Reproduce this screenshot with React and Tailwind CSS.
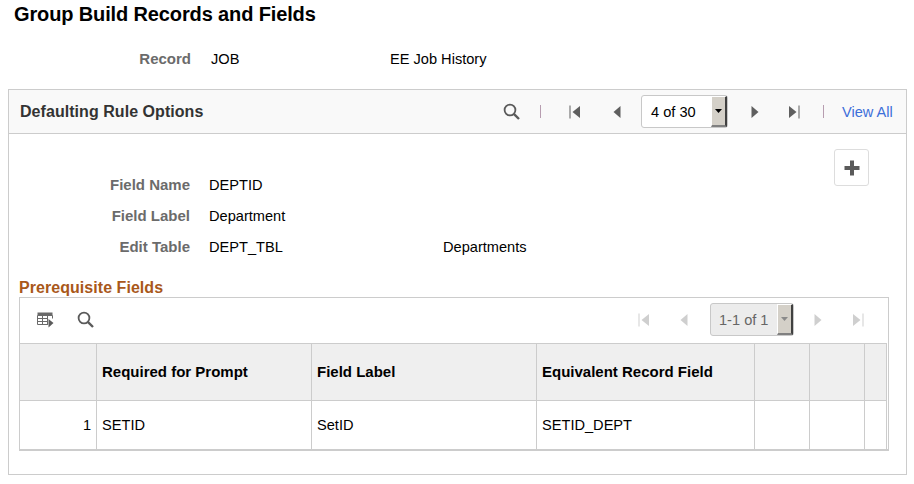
function First({ c }) {
  return (
    <svg width="12" height="14" viewBox="0 0 12 14">
      <rect x="0.5" y="0.5" width="1" height="13" fill={c} />
      <path d="M11 1 L3.5 7 L11 13 Z" fill={c} />
    </svg>
  );
}
function Prev({ c }) {
  return (
    <svg width="8" height="14" viewBox="0 0 8 14">
      <path d="M7.5 1 L0.5 7 L7.5 13 Z" fill={c} />
    </svg>
  );
}
function Next({ c }) {
  return (
    <svg width="8" height="14" viewBox="0 0 8 14">
      <path d="M0.5 1 L7.5 7 L0.5 13 Z" fill={c} />
    </svg>
  );
}
function Last({ c }) {
  return (
    <svg width="12" height="14" viewBox="0 0 12 14">
      <path d="M1 1 L8.5 7 L1 13 Z" fill={c} />
      <rect x="10.5" y="0.5" width="1" height="13" fill={c} />
    </svg>
  );
}
function Search() {
  return (
    <svg width="17" height="17" viewBox="0 0 17 17" fill="none">
      <circle cx="7" cy="7" r="5.4" stroke="#5a5a5a" strokeWidth="1.8" />
      <path d="M10.8 10.8 L16 16" stroke="#5a5a5a" strokeWidth="2.4" />
    </svg>
  );
}
function Personalize() {
  return (
    <svg width="17" height="16" viewBox="0 0 17 16">
      <rect x="0.5" y="0.5" width="15" height="3" fill="#6a6a6a" />
      <path d="M0.5 3.5 H15.5 M0.5 6.5 H11 M0.5 9.5 H11 M0.5 12.5 H11 M0.5 3.5 V12.5 M5.5 3.5 V12.5 M10.5 3.5 V12.5 M15.5 3.5 V6.5" stroke="#6a6a6a" strokeWidth="1" fill="none" />
      <path d="M11.5 7 L16.5 11 L11.5 15.5 Z" fill="#5a5a5a" />
    </svg>
  );
}
function Caret({ c }) {
  return (
    <svg width="7" height="4" viewBox="0 0 7 4">
      <path d="M0 0 H7 L3.5 4 Z" fill={c} />
    </svg>
  );
}
function Sep() {
  return <span className="block w-px h-[13px] bg-[#b79db0]" />;
}

function Dropdown({ text, disabled }) {
  return (
    <div
      className={`flex items-stretch h-[33px] rounded-[3px] border border-[#c8c8c8] ${
        disabled ? "bg-[#ececec] text-[#666666]" : "bg-white text-black"
      }`}
    >
      <span className={`flex items-center ${disabled ? "w-[66px] pl-[8px]" : "w-[69px] pl-[9px]"}`}>{text}</span>
      <span className="flex items-center justify-center w-[16px] bg-[#d4d0c8] border-l border-t border-l-white border-t-white border-r-2 border-b-2 border-r-[#404040] border-b-[#808080]">
        <Caret c={disabled ? "#8a8a8a" : "#000000"} />
      </span>
    </div>
  );
}

function Field({ label, value, extra }) {
  return (
    <div className="flex items-center h-[31px]">
      <span className="w-[181px] text-right text-[15px] font-bold text-[#6b6b6b]">{label}</span>
      <span className="ml-[19px] w-[234px] text-black">{value}</span>
      {extra && <span className="text-black">{extra}</span>}
    </div>
  );
}

const cols = ["w-[77px]", "w-[215px]", "w-[225px]", "w-[218px]", "w-[55px]", "w-[55px]", "w-[22px]"];

export default function App() {
  return (
    <div className="w-[914px] h-[484px] bg-white overflow-hidden text-[14.6px] leading-[16px] font-['Liberation_Sans',Arial,sans-serif]">
      <h1 className="pl-[14px] pt-[4px] h-[44px] text-[20px] leading-[21px] tracking-[-0.13px] font-bold text-black">
        Group Build Records and Fields
      </h1>
      <div className="flex items-center h-[30px]">
        <span className="w-[191px] text-right text-[15px] font-bold text-[#6b6b6b]">Record</span>
        <span className="ml-[20px] w-[179px] text-black">JOB</span>
        <span className="text-black">EE Job History</span>
      </div>

      <section className="mt-[15px] ml-[8px] w-[899px] h-[386px] border border-[#cccccc]">
        <header className="flex items-center h-[44px] bg-[#f9f9f9] border-b border-[#cccccc] pl-[11px]">
          <h2 className="w-[483px] text-[16px] tracking-[0.05px] font-bold text-[#333333]">Defaulting Rule Options</h2>
          <Search />
          <span className="ml-[20px]"><Sep /></span>
          <span className="ml-[28px] flex"><First c="#5f5f5f" /></span>
          <span className="ml-[32px] flex"><Prev c="#5f5f5f" /></span>
          <span className="ml-[20px]"><Dropdown text="4 of 30" /></span>
          <span className="ml-[23px] flex"><Next c="#5f5f5f" /></span>
          <span className="ml-[29px] flex"><Last c="#5f5f5f" /></span>
          <span className="ml-[23px]"><Sep /></span>
          <span className="ml-[18px] text-[#3d6fd9]">View All</span>
        </header>

        <div className="relative pt-[35px]">
          <button className="absolute left-[825px] top-[15px] w-[35px] h-[37px] flex items-center justify-center bg-white border border-[#dddddd] rounded-[3px]">
            <svg width="16" height="16" viewBox="0 0 16 16">
              <path d="M6 0.5 H10 V6 H15.5 V10 H10 V15.5 H6 V10 H0.5 V6 H6 Z" fill="#5a5a5a" />
            </svg>
          </button>
          <Field label="Field Name" value="DEPTID" />
          <Field label="Field Label" value="Department" />
          <Field label="Edit Table" value="DEPT_TBL" extra="Departments" />

          <h3 className="ml-[10px] mt-[17px] text-[16px] leading-[18px] tracking-[0.05px] font-bold text-[#a9581a]">Prerequisite Fields</h3>

          <div className="ml-[10px] w-[870px] border border-b-2 border-[#cccccc]">
            <div className="flex items-center h-[45px] pl-[17px] pb-[2px]">
              <Personalize />
              <span className="ml-[23px] flex"><Search /></span>
              <span className="ml-[544px] flex"><First c="#cfcfcf" /></span>
              <span className="ml-[30px] flex"><Prev c="#cfcfcf" /></span>
              <span className="ml-[22px]"><Dropdown text="1-1 of 1" disabled /></span>
              <span className="ml-[20px] flex"><Next c="#cfcfcf" /></span>
              <span className="ml-[30px] flex"><Last c="#cfcfcf" /></span>
            </div>
            <div className="flex w-[867px] h-[58px] bg-[#efefef] border-y border-r border-[#cccccc] text-[15px] font-bold text-black">
              {["", "Required for Prompt", "Field Label", "Equivalent Record Field", "", "", ""].map((t, i) => (
                <div key={i} className={`${cols[i]} shrink-0 flex items-center pl-[5px] ${i < 6 ? "border-r border-[#cccccc]" : ""}`}>
                  {t}
                </div>
              ))}
            </div>
            <div className="flex w-[867px] h-[48px] border-r border-[#cccccc] text-black">
              {["1", "SETID", "SetID", "SETID_DEPT", "", "", ""].map((t, i) => (
                <div
                  key={i}
                  className={`${cols[i]} shrink-0 flex items-center ${i === 0 ? "justify-end pr-[5px]" : "pl-[5px]"} ${i < 6 ? "border-r border-[#cccccc]" : ""}`}
                >
                  {t}
                </div>
              ))}
            </div>
          </div>
        </div>
      </section>
    </div>
  );
}
